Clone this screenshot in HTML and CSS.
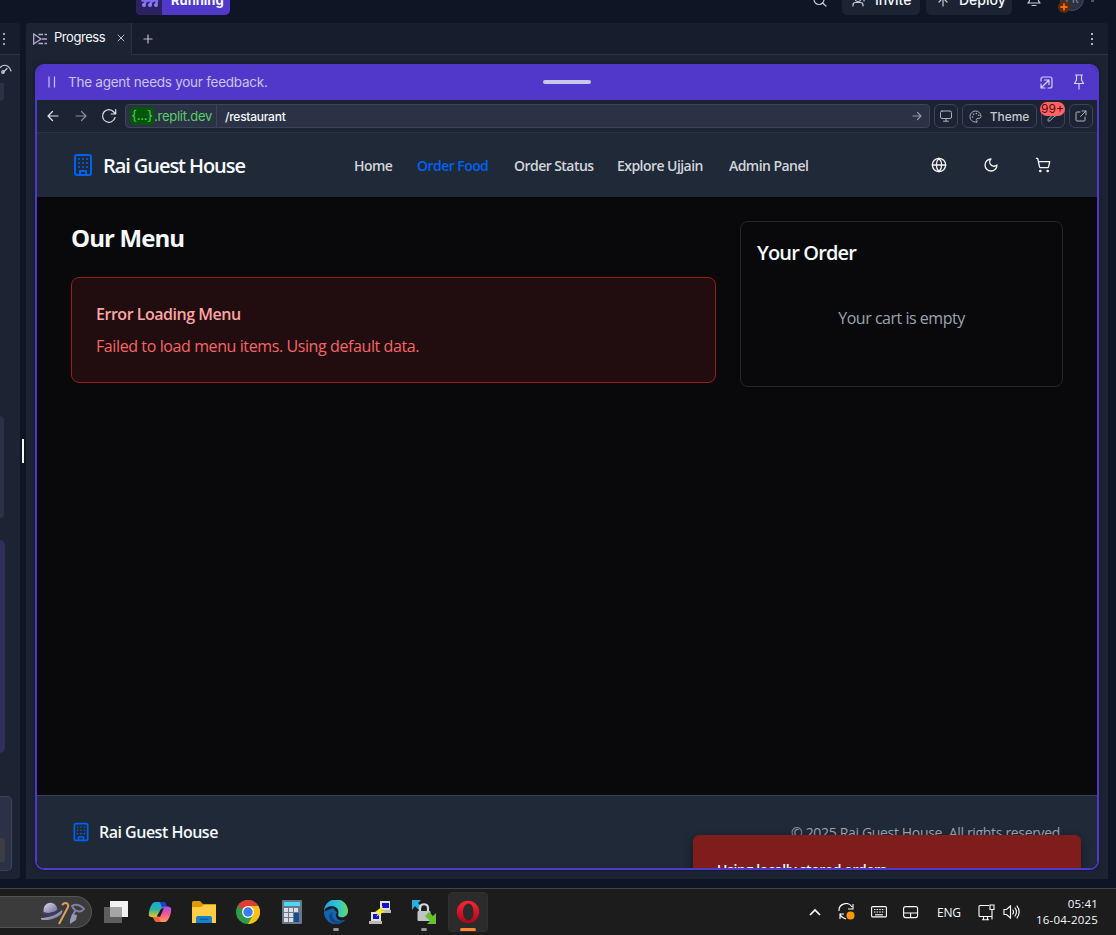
FILE: index.html
```html
<!DOCTYPE html>
<html lang="en">
<head>
<meta charset="utf-8">
<title>Rai Guest House</title>
<link rel="stylesheet" href="styles.css">
</head>
<body>
<header class="topbar">
  <div class="run"><span class="run-icon"><svg width="18" height="14" viewBox="0 0 18 14"><g fill="none" stroke="#7d6cf2" stroke-width="2.600" stroke-linecap="round"><path d="M3 12l2-4h1M9 12l2-4h1M15 12l1-4M1.500 7.500h2M7.500 7.500h2M13.500 7.500h2"/></g><g fill="#8b7cf8"><circle cx="3" cy="12" r="2"/><circle cx="9" cy="12" r="2"/><circle cx="15" cy="12" r="2"/></g></svg></span><span class="run-label">Running</span></div>
  <div class="top-actions">
    <svg class="ic top-search" width="16" height="16" viewBox="0 0 16 16"><circle cx="7" cy="8.500" r="5"/><path d="M10.500 12l3.500 3"/></svg>
    <div class="top-btn invite"><svg class="ic" width="16" height="16" viewBox="0 0 16 16"><circle cx="7" cy="6.500" r="3"/><path d="M2 14v-1a2.500 2.500 0 012.500-2.500h5A2.500 2.500 0 0112 13v1M13 6v3"/></svg><span>Invite</span></div>
    <div class="top-btn deploy"><svg class="ic" width="16" height="16" viewBox="0 0 16 16"><path d="M8 14V6M4 10l4-4 4 4"/></svg><span>Deploy</span></div>
    <svg class="ic bell" width="16" height="16" viewBox="0 0 16 16"><path d="M2 12h12c-1-1-2-3-2-6M4 6c0 3-1 5-2 6M6 14.500h4"/></svg>
    <div class="avatar">PR<svg class="plus" width="12" height="12" viewBox="0 0 12 12"><circle cx="6" cy="6" r="6" fill="#5c2b00"/><path d="M6 2.500v7M2.500 6h7" stroke="#ff6b0a" stroke-width="1.800"/></svg></div>
    <i class="caret"></i>
  </div>
</header>

<main class="workspace">
  <aside class="side">
    <div class="side-head"><svg width="4" height="12" viewBox="0 0 4 12" fill="#9da2b0"><path d="M1 0h2v2H1zM1 5h2v2H1zM1 10h2v2H1z"/></svg></div>
    <svg class="ic gauge" width="12" height="12" viewBox="0 0 12 12"><path d="M0 3.500C4-.5 9 1 11 7M3 8.500l4-4"/><circle cx="3" cy="8" r="1.300"/></svg>
    <i class="chip c1"></i><i class="chip c2"></i><i class="chip c3"></i>
    <div class="composer"><i></i></div>
  </aside>
  <div class="resizer"><i></i></div>

  <section class="pane">
    <div class="tabs">
      <div class="tab">
        <svg width="15" height="12" viewBox="0 0 15 12" fill="none" stroke="#b4abd4" stroke-width="1.300"><path d="M.7 1v10L8 6zM5.500 1.500H10M11.500 1.500H14M9 6h5M5.500 10.500H10M11.500 10.500H14"/></svg>
        <span>Progress</span>
        <svg class="close" width="8" height="8" viewBox="0 0 8 8" fill="none" stroke="#b9bcc7"><path d="M.8.8l6.400 6.400M7.200.8L.8 7.200"/></svg>
      </div>
      <svg class="add" width="10" height="10" viewBox="0 0 10 10" fill="none" stroke="#b9bcc7" stroke-width="1.200"><path d="M5 .5v9M.5 5h9"/></svg>
      <svg class="more" width="4" height="12" viewBox="0 0 4 12" fill="#b0b4c0"><path d="M1 0h2v2H1zM1 5h2v2H1zM1 10h2v2H1z"/></svg>
    </div>

    <div class="frame">
      <div class="banner">
        <svg width="8" height="12" viewBox="0 0 8 12" stroke="#cbc4ee" stroke-width="1.200"><path d="M1 .5v11M6.500 .5v11"/></svg>
        <span class="banner-text">The agent needs your feedback.</span>
        <i class="grip"></i>
        <svg class="ic dock" width="13" height="13" viewBox="0 0 13 13"><path d="M1 5V3a2 2 0 012-2h7a2 2 0 012 2v7a2 2 0 01-2 2H8M4.500 4H9v4.500M9 4l-7.500 7.500M1 8v4h4"/></svg>
        <svg class="ic pin" width="12" height="16" viewBox="0 0 12 16"><path d="M2.500 1h7M3.500 1v5L1.500 9.500h9L8.500 6V1M6 9.500V15"/></svg>
      </div>

      <div class="tools">
        <svg class="ic t-back" width="12" height="12" viewBox="0 0 12 12"><path d="M11 6H1M5.500 1.500L1 6l4.500 4.500"/></svg>
        <svg class="ic t-fwd" width="12" height="12" viewBox="0 0 12 12"><path d="M1 6H11M6.500 1.500L11 6l-4.500 4.500"/></svg>
        <svg class="ic t-rel" width="16" height="16" viewBox="0 0 16 16"><path d="M14 9.500A6.300 6.300 0 1 1 12.800 4l1.700 1.800M14.700 1.500v4.500h-4.500"/></svg>
        <div class="url">
          <div class="host"><b>{...}</b><span>.replit.dev</span></div>
          <span class="path">/restaurant</span>
          <svg class="ic" width="10" height="10" viewBox="0 0 10 10"><path d="M1 5h8M5.500 1.500L9 5 5.500 8.500"/></svg>
        </div>
        <div class="tbtn"><svg class="ic" width="14" height="12" viewBox="0 0 14 12"><rect x="1.500" y="1" width="11" height="7.500" rx="1.500"/><path d="M4.500 11.200h5M7 8.500v2.500"/></svg></div>
        <div class="tbtn theme"><svg class="ic" width="13" height="13" viewBox="0 0 13 13"><path d="M7.500 12C3 12.500 1 9.500 1 6.500a5.500 5.500 0 0111 0c0 2.500-3 1.500-4 2s-.5 1.500 0 2 .3 1.300-.5 1.500z"/><path d="M3.500 7h.1M4.500 4.300h.1M7.300 3.500h.1M9.700 5.300h.1" stroke-width="1.500"/></svg><span>Theme</span></div>
        <div class="tbtn wrench"><svg class="ic" width="12" height="12" viewBox="0 0 12 12"><path d="M11 1L8.500 3.500 5 5.500 1.200 9.200a1.200 1.200 0 001.700 1.700L6.500 7.200 8.500 6"/></svg><span class="count">99+</span></div>
        <div class="tbtn"><svg class="ic" width="12" height="12" viewBox="0 0 12 12"><path d="M5 2H2a1 1 0 00-1 1v7a1 1 0 001 1h7a1 1 0 001-1V7M7 1h4v4M11 1L5.500 6.500"/></svg></div>
      </div>

      <div class="site">
        <nav class="nav">
          <svg class="building" width="24" height="24" viewBox="0 0 24 24"><rect x="4" y="2" width="16" height="20" rx="2"/><path d="M9 22v-4h6v4M8 6h.01M12 6h.01M16 6h.01M8 10h.01M12 10h.01M16 10h.01M8 14h.01M12 14h.01M16 14h.01"/></svg>
          <span class="brand">Rai Guest House</span>
          <div class="links"><a class="l1">Home</a><a class="l2">Order Food</a><a class="l3">Order Status</a><a class="l4">Explore Ujjain</a><a class="l5">Admin Panel</a></div>
          <div class="nav-icons">
            <svg width="16" height="16" viewBox="0 0 24 24"><circle cx="12" cy="12" r="10"/><path d="M12 2a14.500 14.500 0 0 0 0 20 14.500 14.500 0 0 0 0-20M2 12h20"/></svg>
            <svg width="16" height="16" viewBox="0 0 24 24"><path d="M12 3a6 6 0 0 0 9 9 9 9 0 1 1-9-9Z"/></svg>
            <svg width="16" height="16" viewBox="0 0 24 24"><circle cx="8" cy="21" r="1"/><circle cx="19" cy="21" r="1"/><path d="M2.050 2.050h2l2.660 12.420a2 2 0 0 0 2 1.580h9.780a2 2 0 0 0 1.950-1.570l1.650-7.430H5.120"/></svg>
          </div>
        </nav>
        <div class="content">
          <div class="menu">
            <h1>Our Menu</h1>
            <div class="error"><h3>Error Loading Menu</h3><p>Failed to load menu items. Using default data.</p></div>
          </div>
          <div class="order"><h2>Your Order</h2><p>Your cart is empty</p></div>
        </div>
        <footer class="foot">
          <svg class="building" width="20" height="20" viewBox="0 0 24 24"><rect x="4" y="2" width="16" height="20" rx="2"/><path d="M9 22v-4h6v4M8 6h.01M12 6h.01M16 6h.01M8 10h.01M12 10h.01M16 10h.01M8 14h.01M12 14h.01M16 14h.01"/></svg>
          <span class="foot-brand">Rai Guest House</span>
          <span class="copy">© 2025 Rai Guest House. All rights reserved.</span>
        </footer>
        <div class="toast"><span>Using locally stored orders</span></div>
      </div>
    </div>
  </section>
</main>

<footer class="taskbar">
  <div class="search">
    <svg width="46" height="24" viewBox="0 0 46 24"><defs><linearGradient id="hat" x1="0" x2="1" y2="1"><stop stop-color="#dad6ef"/><stop offset="1" stop-color="#69658c"/></linearGradient></defs><path d="M3 13C1 5 6 1 11 2c4 1 5 4 6 8z" fill="url(#hat)"/><path d="M3 11c5 2 10 1 14-3v4c-5 4-9 4-14 2z" fill="#3f3b60"/><path d="M0 17c5 0 15-2 21-8 2 4-6 9-14 10-5 0-8 0-7-2z" fill="url(#hat)"/><path d="M18 23L27 6c1-3-2-6-6-2" fill="none" stroke="#d9a05e" stroke-width="2"/><path d="M31 5c4-3 10 0 12 3-3 4-9 3-12-3zM34 10l-2 4" fill="none" stroke="#827eaa" stroke-width="2"/><path d="M31 13l5 1-1 5-6 4v-4z" fill="#9995bc"/></svg>
  </div>
  <div class="app"><svg width="24" height="22" viewBox="0 0 24 22"><path d="M6 0h18v16H6z" fill="#f1f1f1"/><path d="M0 6h18v16H0z" fill="#5e5e5e"/><path d="M6 6h12v10H6z" fill="#a5a5a5"/></svg></div>
  <div class="app"><svg width="24" height="22" viewBox="0 0 24 22"><defs><linearGradient id="cp1" x1="0" y1="0" x2="0" y2="1"><stop stop-color="#17a6e6"/><stop offset=".5" stop-color="#2fb39b"/><stop offset="1" stop-color="#f2c81d"/></linearGradient><linearGradient id="cp2" x1="0" y1="0" x2="0" y2="1"><stop stop-color="#a550f0"/><stop offset=".5" stop-color="#f4588f"/><stop offset="1" stop-color="#ff9c50"/></linearGradient></defs><path d="M7 1h9l-5 13c-1 3-8 3-10 1-1-3 2-14 6-14z" fill="url(#cp1)"/><path d="M11 1h5c2 0 2 2 3 5l-4 1c-2 0-2-6-4-6z" fill="#1746c9"/><path d="M17 21H8l5-13c1-3 8-3 10-1 1 3-2 14-6 14z" fill="url(#cp2)"/><path d="M5 16h5l3 5H9c-2 0-3-2-4-5z" fill="#f5613d"/><path d="M13 8l3-1-4 9-3-1z" fill="#1c1c1c"/></svg></div>
  <div class="app"><svg width="24" height="22" viewBox="0 0 24 22"><path d="M0 1.500Q0 0 1.500 0H8l3 3H24v5H0z" fill="#dd9a08"/><path d="M0 6h9l3-2h12v18H0z" fill="#ffce45"/><path d="M4 22v-5q0-2 2-2h12q2 0 2 2v5z" fill="#1680cc"/><path d="M8 17.500h8v1.500H8z" fill="#0863a5"/></svg></div>
  <div class="app"><svg width="24" height="24" viewBox="0 0 24 24"><circle cx="12" cy="12" r="12" fill="#2c9c4b"/><path d="M12 12L1.600 6A12 12 0 0122.400 6z" fill="#df3d30"/><path d="M12 6h10.400A12 12 0 0112 24l5-9z" fill="#fbc116"/><circle cx="12" cy="12" r="6" fill="#fff"/><circle cx="12" cy="12" r="4.700" fill="#3d7deb"/></svg></div>
  <div class="app"><svg width="20" height="24" viewBox="0 0 20 24"><rect width="20" height="24" rx="1" fill="#68788a"/><path d="M2 2h16v4H2z" fill="#4cd7f3"/><path d="M2 8h4v4H2zM7 8h4v4H7zM12 8h4v4h-4zM2 13h4v4H2zM7 13h4v4H7zM2 18h4v4H2zM7 18h4v4H7z" fill="#dadfe5"/><path d="M12 13h5v9h-5z" fill="#174e92"/></svg></div>
  <div class="app run-app"><svg width="24" height="24" viewBox="0 0 24 24"><defs><linearGradient id="edge" x1="0" x2="1"><stop stop-color="#239de9"/><stop offset=".6" stop-color="#33c6ce"/><stop offset="1" stop-color="#67d95b"/></linearGradient></defs><path d="M0 11.500A12 12 0 0021.500 19.500c-5 2.500-9 .5-9.500-3.500-.3-2 .5-3 1-3.500L9 8z" fill="#1364b3"/><path d="M8.500 12c-2 7 5 12 12.500 8-4 5-12 5-15 0-2-4 0-7 2.500-8z" fill="#15457f"/><path d="M0 11.500A12 12 0 0124 11c0 5-4 7-8 6-3-1-1.500-2-1.500-5C14.500 5 2 4 0 11.500z" fill="url(#edge)"/></svg></div>
  <div class="app"><svg width="22" height="23" viewBox="0 0 22 23"><path d="M9 9h13v3H11zM0 20h13v3H0z" fill="#b9b9b5"/><path d="M11 0h10v9H11zM2 11h10v9H2z" fill="#e2e1dc"/><path d="M13 2h7v5h-7zM4 13h6v5H4z" fill="#1210d5"/><path d="M14 5L6 11h4l-3 5 9-6h-4z" fill="#f8f000"/></svg></div>
  <div class="app run-app"><svg width="24" height="24" viewBox="0 0 24 24"><path d="M0 0h9L6 3l4 4-3 3-4-4-3 4z" fill="#2bb0e3"/><path d="M8 12V8c0-5 8-5 8 0v4" fill="none" stroke="#d7d7d7" stroke-width="2.200"/><rect x="5.500" y="11" width="13" height="10" rx="1" fill="#c3c3c6"/><path d="M24 24h-9l3-3-5-5 4-4 4 4 3-3z" fill="#65c22b"/></svg></div>
  <div class="app run-app opera"><svg width="24" height="24" viewBox="0 0 24 24"><defs><linearGradient id="op" y2="1" x2="0"><stop stop-color="#ff2436"/><stop offset="1" stop-color="#a90718"/></linearGradient></defs><path fill-rule="evenodd" fill="url(#op)" d="M12 .8a11.200 11.200 0 100 22.400 11.200 11.200 0 000-22.400zM12.500 3.500c3 0 5 4 5 8.500s-2 8.500-5 8.500-5.500-4-5.500-8.500 2.500-8.500 5.500-8.500z"/></svg></div>
  <div class="tray">
    <svg class="t1" width="12" height="8" viewBox="0 0 12 8"><path d="M1 7l5-5 5 5" stroke-width="1.700"/></svg>
    <svg class="t2" width="18" height="18" viewBox="0 0 18 18"><path d="M1 8a7 7 0 0113-4M15 1v5h-5M6 11H2v5M2 11c1 3 3 4 6 5"/><circle cx="12.500" cy="12.500" r="4" fill="#ff9800" stroke="none"/></svg>
    <svg class="t3" width="16" height="12" viewBox="0 0 16 12"><rect x=".6" y=".6" width="14.800" height="10.300" rx="1"/><path d="M3 3.500h10.500M3 6h10.500" stroke-dasharray="1.500 1.100"/><path d="M4 8.800h8"/></svg>
    <svg class="t4" width="16" height="13" viewBox="0 0 16 13"><rect x=".6" y=".6" width="14" height="11" rx="2"/><path d="M1 7h14M7.600 7v5"/></svg>
    <span class="lang">ENG</span>
    <svg class="t5" width="17" height="17" viewBox="0 0 17 17"><path d="M11 1.500H2a1 1 0 00-1 1v9a1 1 0 001 1h11.500M4 15.800h7M5.500 12.500v3M9.500 12.500v3M12 1h4v4.500h-4zM14 5.500v10"/></svg>
    <svg class="t6" width="17" height="16" viewBox="0 0 17 16"><path d="M1 5.500h2.500L7.500 2v12l-4-3.500H1zM9.500 5.500q2 2.500 0 5M11.700 3.500q3.500 4.500 0 9M13.700 1.700q5 6.300 0 12.600"/></svg>
    <div class="clock"><div>05:41</div><div>16-04-2025</div></div>
  </div>
</footer>
</body>
</html>
```

FILE: styles.css
```css
* { box-sizing: border-box; }
body { margin: 0; width: 1116px; height: 935px; overflow: hidden; background: #0e1525; display: flex; flex-direction: column; font-family: Inter, "Liberation Sans", sans-serif; color: #f5f9fc; white-space: nowrap; }
svg { display: block; flex: none; }
i { display: block; flex: none; }
h1, h2, h3, p { margin: 0; }
.ic { fill: none; stroke: #c8ccd6; stroke-width: 1.2; stroke-linecap: round; stroke-linejoin: round; }

/* top bar */
.topbar { height: 23px; flex: none; display: flex; align-items: flex-start; overflow: hidden; padding-left: 136px; }
.run { display: flex; height: 15px; width: 94px; border-radius: 0 0 5px 5px; overflow: hidden; background: #5138cb; }
.run-icon { width: 26px; background: #2c2261; padding: 0 0 8px 5px; display: flex; align-items: flex-end; }
.run-label { font-size: 13px; font-weight: 700; line-height: 16px; margin: -8px 0 0 9px; }
.top-actions { display: flex; margin-left: 582px; }
.top-search { margin-top: -9px; }
.top-btn { height: 15px; background: #1c2333; border-radius: 0 0 5px 5px; display: flex; font-size: 14px; font-weight: 500; overflow: hidden; }
.top-btn span { line-height: 18px; margin-top: -9px; }
.top-btn svg { margin-top: -8px; }
.invite { width: 78px; margin-left: 14px; padding-left: 9px; gap: 8px; }
.deploy { width: 86px; margin-left: 6px; padding-left: 9px; gap: 8px; }
.bell { margin: -9px 0 0 14px; }
.avatar { position: relative; width: 24px; height: 24px; border-radius: 50%; background: #2b3245; border: 1px solid #454b60; margin: -13px 0 0 18px; font-size: 10px; line-height: 23px; text-align: center; color: #9298a8; }
.plus { position: absolute; left: -3px; top: 13px; }
.caret { width: 3px; height: 2px; background: #4e5569; margin-left: 7px; }

/* workspace */
.workspace { height: 856px; flex: none; display: flex; padding-right: 8px; }
.side { width: 20px; background: #1c2333; border-radius: 0 4px 4px 0; overflow: hidden; height: 856px; }
.side-head { height: 32px; background: #171d2d; border-bottom: 1px solid #2b3245; padding: 10px 0 0 2px; }
.gauge { margin-top: 9px; }
.chip { background: #2b3245; width: 4px; border-radius: 0 5px 5px 0; }
.c1 { height: 18px; margin-top: 7px; border-radius: 0 0 5px 0; }
.c2 { height: 102px; margin-top: 315px; }
.c3 { height: 213px; width: 5px; margin-top: 22px; background: #302e5b; }
.composer { width: 12px; height: 75px; margin-top: 43px; background: #2b3245; border: 1px solid #3c445c; border-left: 0; border-radius: 0 5px 5px 0; padding-top: 41px; }
.composer i { width: 5px; height: 24px; background: #3d3e43; border-radius: 0 3px 3px 0; }
.resizer { width: 6px; padding: 416px 0 0 2px; }
.resizer i { width: 2px; height: 24px; background: #f5f9fc; }
.pane { width: 1082px; background: #1c2333; border-radius: 4px 4px 0 0; }
.tabs { height: 32px; display: flex; background: #171d2d; border-bottom: 1px solid #2b3245; border-radius: 4px 4px 0 0; }
.tab { width: 106px; height: 32px; background: #1c2333; border-right: 1px solid #2b3245; border-radius: 4px 0 0 0; display: flex; padding-left: 7px; }
.tab svg:first-child { margin-top: 10px; }
.tab span { font-size: 13px; line-height: 16px; margin: 6px 0 0 6px; width: 51px; letter-spacing: -.45px; }
.close { margin: 11px 0 0 12px; }
.add { margin: 11px 0 0 11px; }
.more { margin: 10px 14px 0 auto; }
.frame { margin: 9px 0 0 9px; width: 1064px; height: 806px; border: 2px solid #5138cb; border-radius: 9px; overflow: hidden; background: #1c2333; box-shadow: 0 0 4px #0e152588; }

.banner { height: 34px; background: #5138cb; display: flex; align-items: center; padding: 0 0 2px 11px; }
.banner-text { font-size: 13.5px; color: #c9c4e6; margin-left: 12px; width: 475px; letter-spacing: -.25px; }
.grip { width: 48px; height: 4px; border-radius: 2px; background: #cbc6ec; }
.dock { margin-left: 449px; }
.dock, .pin { stroke: #d6d1ef; }
.pin { margin-left: 20px; }
.tools { height: 33px; border-bottom: 1px solid #2b3245; display: flex; align-items: center; padding-left: 10px; }
.t-back { stroke: #e1e4eb; }
.t-fwd { margin-left: 16px; stroke: #8a8f9e; }
.t-rel { margin-left: 14px; stroke: #e1e4eb; }
.url { margin-left: 8px; width: 805px; height: 24px; border: 1px solid #3c445c; border-radius: 4px; background: #2b3245; display: flex; align-items: center; font-size: 13px; }
.host { width: 91px; height: 22px; border-right: 1px solid #3c445c; padding-left: 4px; display: flex; align-items: center; color: #57ce65; letter-spacing: -.25px; }
.host b { font-weight: 400; background: #04560b; border-radius: 4px; width: 24px; height: 18px; line-height: 17px; text-align: center; flex: none; }
.path { margin-left: 8px; width: 687px; font-size: 12px; font-weight: 500; letter-spacing: -.25px; }
.url svg { stroke: #9197a7; }
.tbtn { width: 24px; height: 24px; border: 1px solid #3c445c; border-radius: 6px; margin-left: 4px; display: flex; align-items: center; justify-content: center; position: relative; }
.tbtn svg { stroke: #aeb3c0; stroke-width: 1; }
.theme { width: 75px; font-size: 12px; font-weight: 500; color: #c2c8cc; gap: 8px; letter-spacing: -.1px; }
.theme svg { margin-left: -1px; }
.count { position: absolute; left: -2px; top: -3px; width: 25px; height: 14px; border-radius: 7px; background: #ff6464; color: #57070b; font-size: 12px; line-height: 14px; text-align: center; }

/* guest house site */
.site { height: 735px; position: relative; overflow: hidden; background: #09090b; font-family: "Open Sans", "Noto Sans", sans-serif; }
.nav { height: 64px; background: #1f2937; display: flex; align-items: center; padding-left: 34px; }
.building { fill: none; stroke: #0062f5; stroke-width: 2; stroke-linecap: round; stroke-linejoin: round; }
.brand { width: 251px; margin: 0 0 0 8px; font-size: 20px; font-weight: 600; letter-spacing: -1.07px; }
.links { display: flex; font-size: 14px; font-weight: 650; color: #d1d5db; letter-spacing: -.55px; }
.l1 { width: 63px; } .l2 { width: 97px; color: #0062f5; } .l3 { width: 103px; } .l4 { width: 112px; } .l5 { width: 81px; }
.nav-icons { display: flex; gap: 36px; margin-left: 121px; }
.nav-icons svg { fill: none; stroke: #f4f4f5; stroke-width: 2; stroke-linecap: round; stroke-linejoin: round; }
.content { height: 598px; display: flex; padding: 24px 34px; gap: 24px; align-items: flex-start; }
.menu { width: 645px; }
h1 { font-size: 24px; line-height: 32px; font-weight: 700; margin-top: 1px; letter-spacing: -.9px; }
.error { margin-top: 23px; height: 106px; border: 1px solid #991b1b; border-radius: 8px; background: #210d10; padding: 24px; }
h3 { font-size: 16px; line-height: 24px; font-weight: 600; color: #fca5a5; letter-spacing: -.47px; }
.error p { margin-top: 8px; font-size: 16px; line-height: 24px; color: #f76565; letter-spacing: -.4px; }
.order { width: 323px; height: 166px; border: 1px solid #27272a; border-radius: 8px; padding: 17px 16px; }
h2 { font-size: 20px; line-height: 28px; font-weight: 600; letter-spacing: -.85px; }
.order p { margin-top: 39px; text-align: center; font-size: 16px; line-height: 24px; color: #9ca3af; letter-spacing: -.48px; }
.foot { height: 73px; background: #1f2937; border-top: 1px solid #374151; display: flex; align-items: center; padding-left: 34px; }
.foot-brand { font-size: 16px; font-weight: 600; margin: 0 0 1px 8px; width: 692px; letter-spacing: -.5px; }
.copy { font-size: 14px; color: #9ca3af; letter-spacing: -.33px; }
.toast { position: absolute; left: 656px; top: 702px; width: 388px; height: 60px; background: #7f1d1d; border-radius: 6px; padding: 25px 24px; font-size: 14px; line-height: 20px; font-weight: 650; letter-spacing: -.38px; box-shadow: 0 4px 10px #0006; }

/* taskbar */
.taskbar { margin-top: 9px; height: 47px; flex: none; background: #1c1c1c; border-top: 1px solid #454548; display: flex; font-family: "Open Sans", "Noto Sans", sans-serif; }
.search { width: 92px; height: 32px; margin-top: 7px; background: #3b3b3b; border: 1px solid #555; border-left: 0; border-radius: 0 16px 16px 0; padding: 4px 0 0 41px; }
.app { width: 40px; height: 40px; margin: 3px 0 0 4px; border-radius: 4px; display: flex; align-items: center; justify-content: center; position: relative; }
.run-app::after { content: ""; position: absolute; left: 17px; bottom: 1px; width: 6px; height: 3px; border-radius: 2px; background: #969696; }
.opera { background: #2b2b2b; border: 1px solid #303030; }
.opera::after { left: 11px; bottom: 0; width: 16px; background: #fb8b38; }
.tray { display: flex; margin-left: auto; height: 46px; padding-right: 18px; align-items: center; }
.tray svg { fill: none; stroke: #fff; stroke-width: 1.1; }
.t2 { margin-left: 17px; } .t3 { margin-left: 15px; } .t4 { margin-left: 16px; } .t5 { margin-left: 17px; } .t6 { margin-left: 8px; }
.lang { font-size: 12px; margin-left: 18px; width: 24px; letter-spacing: -.2px; }
.clock { margin-left: 15px; width: 63px; text-align: right; font-size: 11.500px; line-height: 16px; letter-spacing: .2px; margin-bottom: 1px; }
```
